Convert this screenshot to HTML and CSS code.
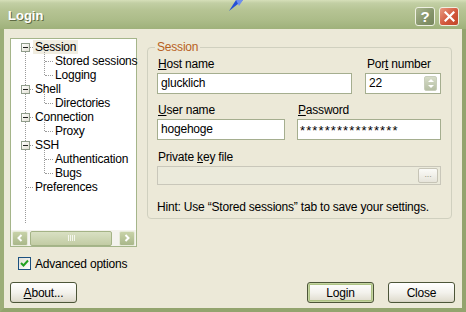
FILE: index.html
```html
<!DOCTYPE html>
<html lang="en">
<head>
    <meta charset="UTF-8">
    <title>Login</title>
    <link rel="stylesheet" href="styles.css">
</head>
<body>
    <div class="window">
        <div class="titlebar">
            <span class="title">Login</span>
            <div class="title-buttons">
                <span class="tb-btn help">?</span>
                <span class="tb-btn close">
                    <svg width="11" height="11" viewBox="0 0 11 11"><path d="M1.5 1.5 L9.5 9.5 M9.5 1.5 L1.5 9.5" stroke="#fff" stroke-width="2.2" stroke-linecap="square"/></svg>
                </span>
            </div>
            <svg class="cursor" width="20" height="12" viewBox="0 0 20 12"><path d="M2 11 L9 0 L16 0 Z" fill="#2450d8"/><path d="M9 0 L16 0 L12 6 Z" fill="#6f8fee"/></svg>
        </div>

        <div class="client">
            <div class="main">
                <div class="left">
                    <div class="tree">
                        <ul class="tree-list">
                            <li class="has-kids"><span class="box"></span><span class="label selected">Session</span>
                                <ul>
                                    <li><span class="label">Stored sessions</span></li>
                                    <li><span class="label">Logging</span></li>
                                </ul>
                            </li>
                            <li class="has-kids"><span class="box"></span><span class="label">Shell</span>
                                <ul>
                                    <li><span class="label">Directories</span></li>
                                </ul>
                            </li>
                            <li class="has-kids"><span class="box"></span><span class="label">Connection</span>
                                <ul>
                                    <li><span class="label">Proxy</span></li>
                                </ul>
                            </li>
                            <li class="has-kids"><span class="box"></span><span class="label">SSH</span>
                                <ul>
                                    <li><span class="label">Authentication</span></li>
                                    <li><span class="label">Bugs</span></li>
                                </ul>
                            </li>
                            <li><span class="label">Preferences</span></li>
                        </ul>
                        <div class="hscroll">
                            <span class="sb-btn">
                                <svg width="8" height="8" viewBox="0 0 8 8"><path d="M5.5 1 L2.5 4 L5.5 7" stroke="#fff" stroke-width="2" fill="none"/></svg>
                            </span>
                            <span class="sb-thumb"><span class="grip"></span></span>
                            <span class="sb-track"></span>
                            <span class="sb-btn">
                                <svg width="8" height="8" viewBox="0 0 8 8"><path d="M2.5 1 L5.5 4 L2.5 7" stroke="#fff" stroke-width="2" fill="none"/></svg>
                            </span>
                        </div>
                    </div>
                    <div class="check">
                        <span class="checkbox">
                            <svg width="11" height="11" viewBox="0 0 11 11"><path d="M2 5 L4.5 7.5 L9 2.5" stroke="#21a121" stroke-width="2" fill="none"/></svg>
                        </span>
                        <span>Advanced options</span>
                    </div>
                </div>

                <fieldset class="group">
                    <legend>Session</legend>
                    <div class="row row-host">
                        <div class="field">
                            <span class="caption"><u>H</u>ost name</span>
                            <div class="input">glucklich</div>
                        </div>
                        <div class="field">
                            <span class="caption port-caption">Por<u>t</u> number</span>
                            <div class="input spin-input">22<span class="spinner"></span></div>
                        </div>
                    </div>
                    <div class="row row-user">
                        <div class="field">
                            <span class="caption"><u>U</u>ser name</span>
                            <div class="input">hogehoge</div>
                        </div>
                        <div class="field">
                            <span class="caption"><u>P</u>assword</span>
                            <div class="input secret">****************</div>
                        </div>
                    </div>
                    <div class="field">
                        <span class="caption">Private <u>k</u>ey file</span>
                        <div class="input disabled"><span class="browse">...</span></div>
                    </div>
                    <p class="hint">Hint: Use “Stored sessions” tab to save your settings.</p>
                </fieldset>
            </div>

            <div class="buttons">
                <span class="btn"><u>A</u>bout...</span>
                <span class="spacer"></span>
                <span class="btn default">Login</span>
                <span class="btn">Close</span>
            </div>
        </div>
    </div>
</body>
</html>
```

FILE: styles.css
```css
* {
    margin: 0;
    padding: 0;
    box-sizing: border-box;
}
body {
    font-family: "Liberation Sans", Arial, sans-serif;
    font-size: 12px;
    letter-spacing: -0.2px;
    color: #000;
    background: #ece9d8;
}
u {
    text-decoration: underline;
    text-underline-offset: 1px;
}
.window {
    width: 466px;
    height: 312px;
    display: flex;
    flex-direction: column;
    background: #9cad77;
    border-left: 4px solid #9cad77;
    border-right: 4px solid #93a46e;
    border-bottom: 4px solid #93a46e;
}
.titlebar {
    position: relative;
    height: 29px;
    margin: 0 -4px;
    padding: 0 7px 0 8px;
    display: flex;
    align-items: center;
    background: linear-gradient(#d6dfb9 0, #c2cfa4 3px, #b6c494 10px, #acbc89 20px, #9fb17b 29px);
}
.title {
    color: #fff;
    font-size: 13px;
    font-weight: bold;
    letter-spacing: 0;
    text-shadow: 1px 1px 0 #5f6b45;
    padding-top: 2px;
}
.title-buttons {
    margin-left: auto;
    display: flex;
    gap: 4px;
    padding-top: 3px;
}
.tb-btn {
    width: 20px;
    height: 19px;
    border: 1px solid #eef0e2;
    border-radius: 3px;
    display: flex;
    align-items: center;
    justify-content: center;
    color: #fff;
    font-weight: bold;
    font-size: 15px;
}
.help {
    background: linear-gradient(135deg, #aab68e, #84936a 60%, #76855c);
}
.close {
    background: linear-gradient(135deg, #e99a82, #d2583c 55%, #c24428);
}
.cursor {
    position: absolute;
    left: 227px;
    top: 0;
}
.client {
    flex: 1;
    background: #ece9d8;
    display: flex;
    flex-direction: column;
    padding: 9px 7px 5px 6px;
}
.main {
    flex: 1;
    display: flex;
    gap: 10px;
    padding-right: 3px;
}
.left {
    width: 127px;
    display: flex;
    flex-direction: column;
}
.tree {
    height: 209px;
    background: #fff;
    border: 1px solid #a5b58a;
    display: flex;
    flex-direction: column;
}
.tree-list {
    flex: 1;
    list-style: none;
    padding-top: 1px;
    position: relative;
}
.tree-list ul {
    list-style: none;
    position: relative;
}
.tree-list li {
    position: relative;
}
.label {
    display: inline-block;
    height: 14px;
    line-height: 14px;
    padding: 0 2px;
    margin-left: 22px;
    white-space: nowrap;
}
.tree-list ul .label {
    margin-left: 42px;
}
.label.selected {
    background: #f0ede1;
}
/* dotted tree lines */
.tree-list::before {
    content: "";
    position: absolute;
    left: 14px;
    top: 8px;
    bottom: 7px;
    border-left: 1px dotted #9a9a9a;
}
.tree-list > li::after {
    content: "";
    position: absolute;
    left: 15px;
    top: 7px;
    width: 7px;
    border-top: 1px dotted #9a9a9a;
}
.tree-list ul::before {
    content: "";
    position: absolute;
    left: 33px;
    top: -6px;
    bottom: 7px;
    border-left: 1px dotted #9a9a9a;
}
.tree-list ul li::after {
    content: "";
    position: absolute;
    left: 34px;
    top: 7px;
    width: 8px;
    border-top: 1px dotted #9a9a9a;
}
.box {
    position: absolute;
    left: 10px;
    top: 3px;
    width: 9px;
    height: 9px;
    border: 1px solid #8f9c8a;
    background: linear-gradient(135deg, #fff, #e2e0d4);
    z-index: 1;
}
.box::after {
    content: "";
    position: absolute;
    left: 1px;
    top: 3px;
    width: 5px;
    height: 1px;
    background: #202020;
}
.hscroll {
    height: 16px;
    display: flex;
    align-items: center;
    gap: 1px;
    padding: 0 1px;
    background: #f4f3ee;
}
.sb-btn {
    width: 16px;
    height: 15px;
    border: 1px solid #e6ead8;
    border-radius: 2px;
    background: linear-gradient(#c8d2a8, #a9b78a);
    display: flex;
    align-items: center;
    justify-content: center;
}
.sb-thumb {
    width: 82px;
    height: 15px;
    margin-left: 1px;
    border: 1px solid #a4b386;
    border-radius: 2px;
    background: linear-gradient(#d9e0c3, #c2cca4);
    display: flex;
    align-items: center;
    justify-content: center;
}
.grip {
    width: 7px;
    height: 6px;
    background: repeating-linear-gradient(90deg, #f4f6ec 0 1px, transparent 1px 2px);
}
.sb-track {
    flex: 1;
}
.check {
    margin-top: 10px;
    margin-left: 8px;
    display: flex;
    align-items: center;
    gap: 4px;
    height: 13px;
}
.checkbox {
    width: 13px;
    height: 13px;
    border: 1px solid #1c5180;
    background: linear-gradient(135deg, #e0ded5, #fff);
    display: flex;
    align-items: center;
    justify-content: center;
}
.group {
    width: 305px;
    height: 179px;
    margin-top: 2px;
    border: 1px solid #d0d0bf;
    border-radius: 4px;
    padding: 3px 10px 0 9px;
    display: flex;
    flex-direction: column;
}
.group legend {
    color: #b8611e;
    line-height: 14px;
    padding: 0 2px;
    margin-left: -2px;
}
.row {
    display: grid;
    margin-bottom: 9px;
}
.row-host {
    grid-template-columns: 195px 1fr;
    column-gap: 13px;
}
.row-user {
    grid-template-columns: 128px 1fr;
    column-gap: 12px;
    margin-bottom: 10px;
}
.field {
    display: flex;
    flex-direction: column;
    gap: 2px;
}
.caption {
    line-height: 14px;
    padding-left: 1px;
}
.port-caption {
    padding-left: 2px;
}
.input {
    position: relative;
    height: 21px;
    line-height: 19px;
    border: 1px solid #a5ae8f;
    background: #fff;
    padding: 0 3px;
    white-space: nowrap;
}
.input.secret {
    font-size: 13px;
    letter-spacing: 1.1px;
    line-height: 21px;
    padding-left: 2px;
}
.spinner {
    position: absolute;
    right: 3px;
    top: 2px;
    width: 13px;
    height: 15px;
    border-radius: 2px;
    background: linear-gradient(#d6dcc8, #b6bfa4);
    border: 1px solid #c8cebb;
}
.spinner::before,
.spinner::after {
    content: "";
    position: absolute;
    left: 3px;
    border-left: 3px solid transparent;
    border-right: 3px solid transparent;
}
.spinner::before {
    top: 2px;
    border-bottom: 3px solid #fff;
}
.spinner::after {
    bottom: 2px;
    border-top: 3px solid #fff;
}
.input.disabled {
    height: 19px;
    background: #ebeadb;
    border-color: #c9c7ba;
}
.browse {
    position: absolute;
    right: 2px;
    top: 1px;
    width: 20px;
    height: 15px;
    border: 1px solid #c6c4b6;
    border-radius: 2px;
    background: linear-gradient(#fbfbf8, #e6e4da);
    color: #9a9888;
    font-size: 9px;
    line-height: 11px;
    text-align: center;
}
.hint {
    margin-top: 15px;
    line-height: 14px;
    white-space: nowrap;
}
.buttons {
    display: flex;
    gap: 14px;
    height: 21px;
}
.spacer {
    flex: 1;
}
.btn {
    width: 67px;
    height: 21px;
    border: 1px solid #4c5538;
    border-radius: 3px;
    background: linear-gradient(#ffffff, #f3f2ec 50%, #e2dfd2 90%, #d4d0c0);
    display: flex;
    align-items: center;
    justify-content: center;
}
.btn.default {
    box-shadow: inset 0 0 0 1px #c4d4a0, inset 0 0 0 2px #adc284;
}
```
